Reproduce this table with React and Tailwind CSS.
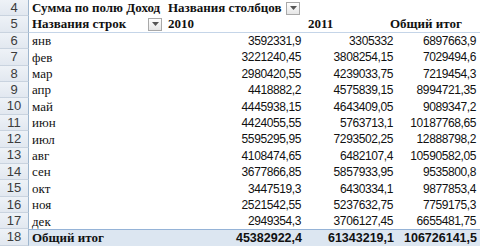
import React from "react";

const rows = [
  ["янв", "3592331,9", "3305332", "6897663,9"],
  ["фев", "3221240,45", "3808254,15", "7029494,6"],
  ["мар", "2980420,55", "4239033,75", "7219454,3"],
  ["апр", "4418882,2", "4575839,15", "8994721,35"],
  ["май", "4445938,15", "4643409,05", "9089347,2"],
  ["июн", "4424055,55", "5763713,1", "10187768,65"],
  ["июл", "5595295,95", "7293502,25", "12888798,2"],
  ["авг", "4108474,65", "6482107,4", "10590582,05"],
  ["сен", "3677866,85", "5857933,95", "9535800,8"],
  ["окт", "3447519,3", "6430334,1", "9877853,4"],
  ["ноя", "2521542,55", "5237632,75", "7759175,3"],
  ["дек", "2949354,3", "3706127,45", "6655481,75"],
];

function FilterBtn() {
  return (
    <div className="flex h-[13px] w-[14px] shrink-0 items-center justify-center border border-[#a9a9a9] bg-gradient-to-b from-white to-[#e6e6e6]">
      <svg width="7" height="4" viewBox="0 0 7 4">
        <path d="M0 0 L7 0 L3.5 4 Z" fill="#555" />
      </svg>
    </div>
  );
}

function RowNum({ n }) {
  return (
    <div className="flex h-full w-[29px] shrink-0 items-center justify-center border-r border-b border-r-[#9eb6ce] border-b-[#c9d3df] bg-gradient-to-b from-[#eef2f7] to-[#e2e8f0] font-['Liberation_Sans',Arial,sans-serif] text-[13px] font-normal text-[#3c3c3c]">
      {n}
    </div>
  );
}

export default function App() {
  return (
    <div className="h-[246px] w-[480px] overflow-hidden bg-white font-['Liberation_Serif','Times_New_Roman',serif] text-[#111]">
      {/* Row 4 */}
      <div className="flex h-[16.4px] items-center text-[13px] font-bold">
        <RowNum n={4} />
        <div className="w-[136px] shrink-0 whitespace-nowrap pl-[3px]">Сумма по полю Доход</div>
        <div className="flex items-center gap-[5px] whitespace-nowrap pl-[3px]">
          <span>Названия столбцов</span>
          <FilterBtn />
        </div>
      </div>
      {/* Row 5 */}
      <div className="flex h-[16.4px] items-center text-[13px] font-bold">
        <RowNum n={5} />
        <div className="flex h-full flex-1 items-center border-b border-[#c5d5e8]">
          <div className="flex w-[136px] shrink-0 items-center justify-between px-[3px]">
            <span>Названия строк</span>
            <FilterBtn />
          </div>
          <div className="w-[140px] shrink-0 pl-[3px]">2010</div>
          <div className="w-[82px] shrink-0 pl-[3px]">2011</div>
          <div className="flex-1 whitespace-nowrap pl-[3px]">Общий итог</div>
        </div>
      </div>
      {rows.map((r, i) => (
        <div key={i} className="flex h-[16.4px] items-center">
          <RowNum n={6 + i} />
          <div className="w-[136px] shrink-0 pl-[3px] text-[13px]">{r[0]}</div>
          <div className="w-[140px] shrink-0 pr-[4px] text-right font-['Liberation_Sans',Arial,sans-serif] text-[12px] tracking-[-0.4px]">{r[1]}</div>
          <div className="w-[92px] shrink-0 pr-[4px] text-right font-['Liberation_Sans',Arial,sans-serif] text-[12px] tracking-[-0.4px]">{r[2]}</div>
          <div className="flex-1 pr-[4px] text-right font-['Liberation_Sans',Arial,sans-serif] text-[12px] tracking-[-0.4px]">{r[3]}</div>
        </div>
      ))}
      {/* Row 18 */}
      <div className="flex h-[16.4px] items-center">
        <RowNum n={18} />
        <div className="flex h-full flex-1 items-center border-t border-[#95b3d7] bg-[#dce6f1] font-bold">
          <div className="w-[136px] shrink-0 pl-[3px] text-[13px]">Общий итог</div>
          <div className="w-[140px] shrink-0 pr-[3px] text-right font-['Liberation_Sans',Arial,sans-serif] text-[12.5px]">45382922,4</div>
          <div className="w-[92px] shrink-0 pr-[3px] text-right font-['Liberation_Sans',Arial,sans-serif] text-[12.5px]">61343219,1</div>
          <div className="flex-1 pr-[3px] text-right font-['Liberation_Sans',Arial,sans-serif] text-[12.5px]">106726141,5</div>
        </div>
      </div>
    </div>
  );
}
